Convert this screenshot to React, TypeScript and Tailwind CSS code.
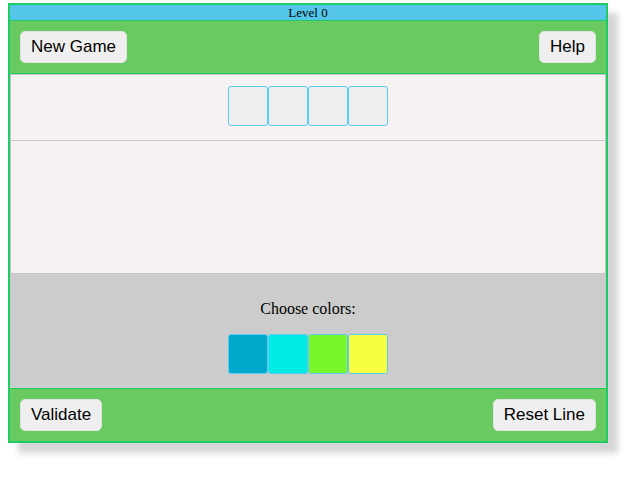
const slots = [0, 1, 2, 3];
const colors = ['#00a8cc', '#00ebe6', '#77f72c', '#f8ff40'];

function Btn({ label }: { label: string }) {
  return (
    <button className="h-[32px] px-[10px] rounded-[5px] bg-[#efefef] border border-[#e2e2e2] text-[17px] text-black font-['Liberation_Sans',Arial,sans-serif]">
      {label}
    </button>
  );
}

export default function App() {
  return (
    <div className="w-[642px] h-[486px] bg-white pt-[3px] pl-[8px]">
      <div className="w-[600px] border-2 border-[#1fcc63] shadow-[10px_10px_6px_#d6d6d6] bg-white">
        <div className="h-[16px] bg-[#53c6ea] border-b border-[#1fcc63] text-center text-[13px] leading-[15px] text-black font-['Liberation_Serif',serif]">
          Level 0
        </div>
        <div className="h-[53px] bg-[#6aca62] border-b border-[#1fcc63] flex items-center justify-between px-[10px]">
          <Btn label="New Game" />
          <Btn label="Help" />
        </div>
        <div className="h-[200px] bg-[#f5f2f1] border border-[#c6c6c6]">
          <div className="h-[66px] border-b border-[#c6c6c6] flex justify-center items-start pt-[11px]">
            {slots.map((s) => (
              <div key={s} className="w-[40px] h-[40px] bg-[#eeeeee] border border-[#5ccbef] rounded-[3px]" />
            ))}
          </div>
        </div>
        <div className="h-[114px] bg-[#cccccc] flex flex-col items-center pt-[25px]">
          <div className="text-[16px] leading-[20px] text-black font-['Liberation_Serif',serif]">Choose colors:</div>
          <div className="flex mt-[15px]">
            {colors.map((c) => (
              <div
                key={c}
                className="w-[40px] h-[40px] border border-[#5ccbef] rounded-[3px]"
                style={{ backgroundColor: c }}
              />
            ))}
          </div>
        </div>
        <div className="h-[53px] bg-[#6aca62] border-t border-[#1fcc63] flex items-center justify-between px-[10px]">
          <Btn label="Validate" />
          <Btn label="Reset Line" />
        </div>
      </div>
    </div>
  );
}
